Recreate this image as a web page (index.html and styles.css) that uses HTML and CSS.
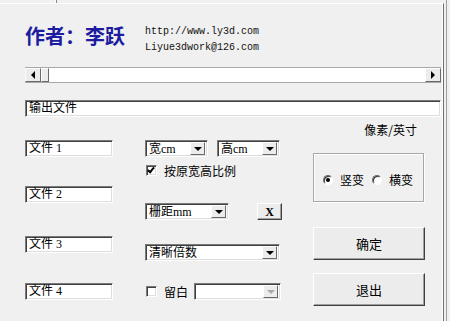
FILE: index.html
```html
<!DOCTYPE html>
<html lang="zh">
<head>
    <meta charset="UTF-8">
    <title>立体画制作</title>
    <link rel="stylesheet" href="styles.css">
</head>
<body>

<div class="tabs"><span class="tab-edge"></span></div>
<div class="panel">
    <div class="head">
        <div class="author">作者：李跃</div>
        <div class="contact">http://www.ly3d.com<br>Liyue3dwork@126.com</div>
    </div>

    <div class="hscroll">
        <span class="sbtn"><span class="tri-left"></span></span>
        <span class="thumb"></span>
        <span class="track"></span>
        <span class="sbtn"><span class="tri-right"></span></span>
    </div>

    <div class="field out">输出文件</div>

    <div class="main">
        <div class="col files">
            <div class="field file f1">文件 1</div>
            <div class="field file f2">文件 2</div>
            <div class="field file f3">文件 3</div>
            <div class="field file f4">文件 4</div>
        </div>

        <div class="col opts">
            <div class="row r-size">
                <div class="combo w63"><span class="val">宽cm</span><span class="drop"><span class="tri-down"></span></span></div>
                <div class="combo w63"><span class="val">高cm</span><span class="drop"><span class="tri-down"></span></span></div>
            </div>
            <div class="row r-keep">
                <span class="check on"></span>
                <span class="lbl">按原宽高比例</span>
            </div>
            <div class="row r-pitch">
                <div class="combo w84"><span class="val">栅距mm</span><span class="drop"><span class="tri-down"></span></span></div>
                <button class="btn-x">X</button>
            </div>
            <div class="row r-sharp">
                <div class="combo w135"><span class="val">清晰倍数</span><span class="drop"><span class="tri-down"></span></span></div>
            </div>
            <div class="row r-margin">
                <span class="check"></span>
                <span class="lbl">留白</span>
                <div class="combo w87 disabled"><span class="val"></span><span class="drop"><span class="tri-down"></span></span></div>
            </div>
        </div>

        <div class="col side">
            <div class="unit">像素/英寸</div>
            <div class="group">
                <span class="radio on"></span><span class="lbl">竖变</span>
                <span class="radio"></span><span class="lbl">横变</span>
            </div>
            <button class="btn big ok">确定</button>
            <button class="btn big quit">退出</button>
        </div>
    </div>
</div>
<div class="edge"></div>

</body>
</html>
```

FILE: styles.css
```css
body {
    margin: 0;
    width: 450px;
    height: 321px;
    overflow: hidden;
    background-color: #f0f0f0;
    font-family: "Liberation Serif", "Noto Sans CJK SC", serif;
    font-size: 12px;
    color: #000;
    position: relative;
}

.tabs {
    height: 3px;
    width: 443px;
    position: relative;
}
.tab-edge {
    position: absolute;
    left: 56px;
    top: 0;
    width: 1px;
    height: 3px;
    background-color: #8a8a8a;
    box-shadow: -1px 0 0 #fff;
}

.panel {
    width: 416px;
    height: 317px;
    border-top: 1px solid #fff;
    border-right: 1px solid #6f6f6f;
    box-shadow: inset -1px 0 0 #fff;
    padding: 0 2px 0 25px;
}
.edge {
    position: absolute;
    left: 446px;
    top: 0;
    width: 1px;
    height: 321px;
    background-color: #a0a0a0;
}

/* cabecera */
.head {
    display: flex;
    align-items: flex-start;
    margin-top: 20px;
}
.author {
    width: 120px;
    margin-top: 2px;
    font-family: "Noto Sans CJK SC", sans-serif;
    font-size: 20px;
    font-weight: 700;
    line-height: 20px;
    color: #1c1ca0;
}
.contact {
    font-family: "Liberation Mono", monospace;
    font-size: 10px;
    line-height: 16px;
    color: #111;
}

/* barra de desplazamiento */
.hscroll {
    display: flex;
    height: 16px;
    margin-top: 11px;
    background-color: #fff;
    border-top: 1px solid #a8a8a8;
    border-bottom: 1px solid #a8a8a8;
    box-sizing: border-box;
}
.sbtn, .thumb {
    width: 16px;
    height: 14px;
    background-color: #ececec;
    border: 1px solid;
    border-color: #fff #6a6a6a #6a6a6a #fff;
    box-sizing: border-box;
    display: flex;
    align-items: center;
    justify-content: center;
}
.thumb {
    width: 8px;
}
.track {
    flex: 1;
}
.tri-left {
    border-right: 4px solid #000;
    border-top: 4px solid transparent;
    border-bottom: 4px solid transparent;
}
.tri-right {
    border-left: 4px solid #000;
    border-top: 4px solid transparent;
    border-bottom: 4px solid transparent;
}
.tri-down {
    border-top: 4px solid #000;
    border-left: 4px solid transparent;
    border-right: 4px solid transparent;
}

/* campos */
.field, .combo {
    height: 17px;
    background-color: #fff;
    border: 1px solid;
    border-color: #7a7a7a #fff #fff #7a7a7a;
    box-shadow: inset 1px 1px 0 #404040, inset -1px -1px 0 #dedede;
    box-sizing: border-box;
    font-family: "Liberation Serif", "Noto Sans CJK SC", serif;
    font-size: 12px;
    line-height: 14px;
    padding-left: 3px;
}
.out {
    margin-top: 17px;
}

.main {
    display: flex;
}
.col {
    display: flex;
    flex-direction: column;
}

.files {
    width: 88px;
}
.f1 { margin-top: 23px; }
.f2 { margin-top: 29px; }
.f3 { margin-top: 33px; }
.f4 { margin-top: 30px; }

/* opciones */
.opts {
    width: 137px;
    margin-left: 32px;
}
.row {
    display: flex;
    align-items: center;
}
.r-size { margin-top: 23px; gap: 9px; }
.r-keep { margin-top: 7px; height: 13px; }
.r-pitch { margin-top: 26px; }
.r-sharp { margin-top: 24px; }
.r-margin { margin-top: 22px; }

.combo {
    display: flex;
    align-items: center;
    padding: 0 2px 0 3px;
}
.combo .val {
    flex: 1;
    white-space: nowrap;
}
.drop {
    width: 15px;
    height: 13px;
    background-color: #ececec;
    border: 1px solid;
    border-color: #fff #6a6a6a #6a6a6a #fff;
    box-sizing: border-box;
    display: flex;
    align-items: center;
    justify-content: center;
}
.disabled .tri-down {
    border-top-color: #a8a8a8;
}
.w63 { width: 63px; }
.w84 { width: 84px; }
.w87 { width: 87px; }
.w135 { width: 135px; }

.check {
    width: 11px;
    height: 11px;
    margin-left: 1px;
    background-color: #fff;
    border: 1px solid;
    border-color: #7a7a7a #fff #fff #7a7a7a;
    box-shadow: inset 1px 1px 0 #404040, inset -1px -1px 0 #dedede;
    box-sizing: border-box;
    position: relative;
}
.check.on::after {
    content: "";
    position: absolute;
    left: 2px;
    top: 0px;
    width: 2px;
    height: 5px;
    border: solid #000;
    border-width: 0 2px 2px 0;
    transform: rotate(40deg);
}
.lbl {
    font-family: "Noto Sans CJK SC", sans-serif;
    line-height: 13px;
    margin-left: 7px;
}
.r-margin .lbl {
    margin-right: 6px;
}

button {
    font-family: "Liberation Serif", "Noto Sans CJK SC", serif;
    background-color: #ececec;
    border: 1px solid;
    border-color: #fff #404040 #404040 #fff;
    box-shadow: inset -1px -1px 0 #a0a0a0;
    padding: 0;
    color: #000;
}
.btn-x {
    width: 25px;
    height: 17px;
    margin-left: 28px;
    font-size: 12px;
    font-weight: 700;
    line-height: 14px;
}

/* lado derecho */
.side {
    width: 112px;
    margin-left: 31px;
}
.unit {
    margin-top: 6px;
    font-family: "Noto Sans CJK SC", sans-serif;
    line-height: 14px;
    text-align: right;
    padding-right: 8px;
}
.group {
    margin-top: 16px;
    height: 49px;
    width: 111px;
    box-sizing: border-box;
    border: 1px solid #a8a8a8;
    box-shadow: 1px 1px 0 #fff, inset 1px 1px 0 #fff;
    display: flex;
    align-items: center;
    padding-left: 9px;
    padding-top: 4px;
}
.radio {
    width: 10px;
    height: 10px;
    border-radius: 50%;
    background-color: #fff;
    border: 1px solid;
    border-color: #6a6a6a #fff #fff #6a6a6a;
    box-shadow: inset 1px 1px 0 #333;
    box-sizing: border-box;
    position: relative;
}
.radio.on::after {
    content: "";
    position: absolute;
    left: 2px;
    top: 2px;
    width: 4px;
    height: 4px;
    border-radius: 50%;
    background-color: #000;
}
.group .lbl {
    margin-left: 7px;
    margin-right: 8px;
}
.big {
    width: 112px;
    height: 33px;
    font-family: "Noto Sans CJK SC", sans-serif;
    font-size: 13px;
}
.ok { margin-top: 25px; }
.quit { margin-top: 13px; }
```
